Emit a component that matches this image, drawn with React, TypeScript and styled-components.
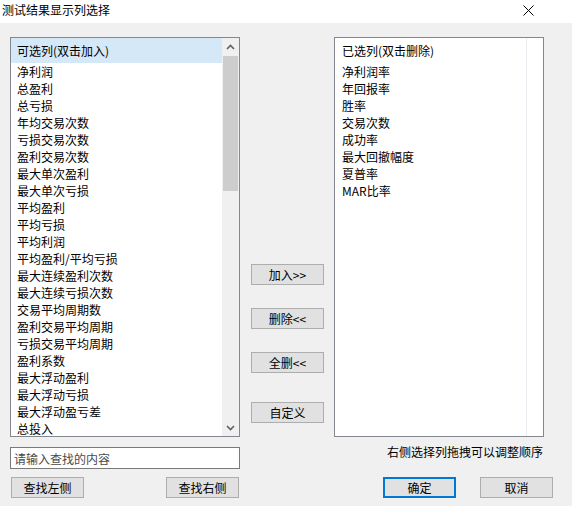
import React from "react";
import styled, { createGlobalStyle } from "styled-components";

const Global = createGlobalStyle`
  html, body { margin: 0; padding: 0; background: #f0f0f0; }
  body { font-family: "Noto Sans CJK SC", "Noto Sans", sans-serif; font-size: 12px; color: #000; }
  * { box-sizing: border-box; }
`;

const Window = styled.div`
  width: 572px;
  height: 506px;
  background: #f0f0f0;
  overflow: hidden;
  display: flex;
  flex-direction: column;
`;

const TitleBar = styled.div`
  height: 23px;
  background: #fff;
  display: flex;
  align-items: center;
  justify-content: space-between;
  padding: 0 38px 3px 2px;
`;

const Title = styled.span`
  font-size: 12px;
  line-height: 16px;
`;

const Body = styled.div`
  display: grid;
  grid-template-columns: 230px 94px 210px 28px;
  grid-template-rows: 400px 40px 21px;
  padding: 14px 0 0 10px;
`;

const ListBox = styled.div`
  height: 400px;
  border: 1px solid #828790;
  background: #fff;
  display: flex;
  overflow: hidden;
`;

const ListContent = styled.div<{ $divider?: boolean }>`
  flex: 1;
  display: flex;
  flex-direction: column;
  overflow: hidden;
  border-right: ${(p) => (p.$divider ? "1px solid #eaeef3" : "none")};
`;

const Header = styled.div<{ $active?: boolean; $pad: number }>`
  height: 25px;
  flex: none;
  line-height: 25px;
  padding-left: ${(p) => p.$pad}px;
  background: ${(p) => (p.$active ? "#d5e8f8" : "transparent")};
  white-space: nowrap;
`;

const Row = styled.div<{ $pad: number }>`
  height: 17px;
  flex: none;
  line-height: 17px;
  padding-left: ${(p) => p.$pad}px;
  white-space: nowrap;
`;

const ScrollBar = styled.div`
  width: 17px;
  flex: none;
  background: #f0f0f0;
  display: flex;
  flex-direction: column;
`;

const Arrow = styled.div`
  height: 17px;
  flex: none;
  display: flex;
  align-items: center;
  justify-content: center;
`;

const Track = styled.div`
  flex: 1;
  padding: 1px 1px 0 1px;
`;

const Thumb = styled.div`
  height: 135px;
  background: #cdcdcd;
`;

const RightPad = styled.div<{ $w: number }>`
  width: ${(p) => p.$w}px;
  flex: none;
`;

const MiddleCol = styled.div`
  display: flex;
  flex-direction: column;
  padding: 227px 0 0 11px;
`;

const Btn = styled.button<{ $gap?: number; $primary?: boolean }>`
  width: 73px;
  height: 21px;
  padding: 0;
  margin-top: ${(p) => p.$gap ?? 0}px;
  background: #e1e1e1;
  border: 1px solid ${(p) => (p.$primary ? "#0078d7" : "#adadad")};
  box-shadow: ${(p) => (p.$primary ? "inset 0 0 0 1px #0078d7" : "none")};
  font-family: "Noto Sans CJK SC", "Noto Sans", sans-serif;
  font-size: 12px;
  line-height: 17px;
  color: #000;
  flex: none;
`;

const SearchCell = styled.div`
  padding-top: 10px;
`;

const SearchInput = styled.input`
  width: 230px;
  height: 22px;
  border: 1px solid #7a7a7a;
  background: #fff;
  padding: 0 0 0 3px;
  font-family: "Noto Sans CJK SC", "Noto Sans", sans-serif;
  font-size: 12px;
  outline: none;
  &::placeholder { color: #4a4a4a; }
`;

const Hint = styled.div`
  grid-column: 3 / span 1;
  text-align: right;
  padding: 7px 1px 0 0;
  line-height: 16px;
  white-space: nowrap;
`;

const LeftButtons = styled.div`
  display: flex;
  justify-content: space-between;
  padding: 0 1px;
`;

const RightButtons = styled.div`
  grid-column: 3 / span 2;
  display: flex;
  gap: 24px;
  padding-left: 49px;
`;

const Chevron = ({ up }: { up?: boolean }) => (
  <svg width="9" height="6" viewBox="0 0 9 6">
    <polyline
      points={up ? "1,5 4.5,1.5 8,5" : "1,1 4.5,4.5 8,1"}
      fill="none"
      stroke="#606060"
      strokeWidth="1.6"
    />
  </svg>
);

const CloseIcon = () => (
  <svg width="11" height="11" viewBox="0 0 11 11">
    <path d="M0.5 0.5 L10.5 10.5 M10.5 0.5 L0.5 10.5" stroke="#000" strokeWidth="1" />
  </svg>
);

const available = [
  "净利润", "总盈利", "总亏损", "年均交易次数", "亏损交易次数", "盈利交易次数",
  "最大单次盈利", "最大单次亏损", "平均盈利", "平均亏损", "平均利润",
  "平均盈利/平均亏损", "最大连续盈利次数", "最大连续亏损次数", "交易平均周期数",
  "盈利交易平均周期", "亏损交易平均周期", "盈利系数", "最大浮动盈利",
  "最大浮动亏损", "最大浮动盈亏差", "总投入",
];

const selected = ["净利润率", "年回报率", "胜率", "交易次数", "成功率", "最大回撤幅度", "夏普率", "MAR比率"];

export default function App() {
  return (
    <Window>
      <Global />
      <TitleBar>
        <Title>测试结果显示列选择</Title>
        <CloseIcon />
      </TitleBar>
      <Body>
        <ListBox>
          <ListContent>
            <Header $active $pad={6}>可选列(双击加入)</Header>
            {available.map((t) => (
              <Row key={t} $pad={6}>{t}</Row>
            ))}
          </ListContent>
          <ScrollBar>
            <Arrow><Chevron up /></Arrow>
            <Track><Thumb /></Track>
            <Arrow><Chevron /></Arrow>
          </ScrollBar>
        </ListBox>
        <MiddleCol>
          <Btn>加入&gt;&gt;</Btn>
          <Btn $gap={23}>删除&lt;&lt;</Btn>
          <Btn $gap={23}>全删&lt;&lt;</Btn>
          <Btn $gap={29}>自定义</Btn>
        </MiddleCol>
        <ListBox>
          <ListContent $divider>
            <Header $pad={7}>已选列(双击删除)</Header>
            {selected.map((t) => (
              <Row key={t} $pad={7}>{t}</Row>
            ))}
          </ListContent>
          <RightPad $w={16} />
        </ListBox>
        <div />
        <SearchCell>
          <SearchInput placeholder="请输入查找的内容" />
        </SearchCell>
        <div />
        <Hint>右侧选择列拖拽可以调整顺序</Hint>
        <div />
        <LeftButtons>
          <Btn>查找左侧</Btn>
          <Btn>查找右侧</Btn>
        </LeftButtons>
        <div />
        <RightButtons>
          <Btn $primary>确定</Btn>
          <Btn>取消</Btn>
        </RightButtons>
      </Body>
    </Window>
  );
}
